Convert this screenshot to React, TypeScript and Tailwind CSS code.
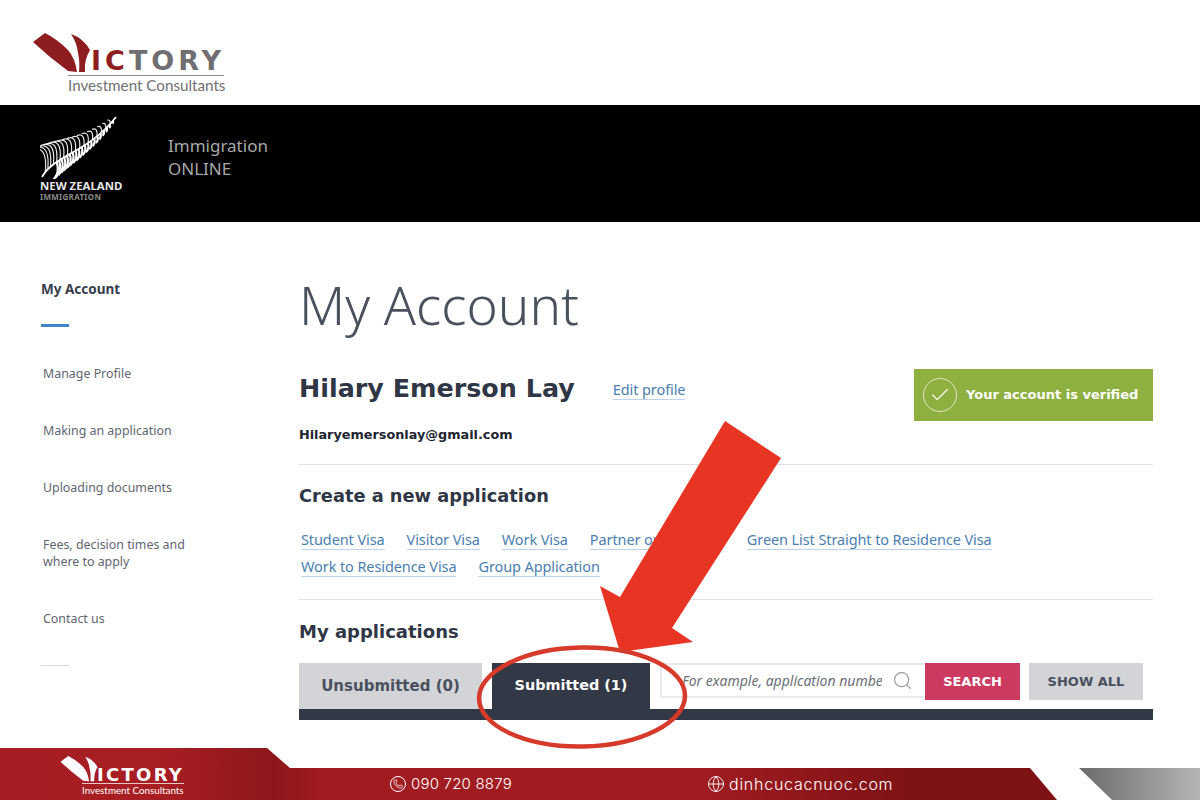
import { Check, Globe, Phone, Search } from "lucide-react";

const sideLinks = [
  { label: "Manage Profile", cls: "mt-[38px]" },
  { label: "Making an application", cls: "mt-[40px]" },
  { label: "Uploading documents", cls: "mt-[40px]" },
  { label: "Fees, decision times and where to apply", cls: "mt-[40px]" },
  { label: "Contact us", cls: "mt-[40px]" },
];

const VictoryMark = ({ color }: { color: string }) => (
  <svg viewBox="0 0 60 40" className="h-full w-full">
    <path d="M0 9 L12 0 Q24 6 35 17 Q42 25 44 39 L35 38 Q16 24 0 9 Z" fill={color} />
    <path d="M38 1 Q50 5 57 17 Q51 27 52 39 L46 39 Q47 28 45 20 Q44 10 38 1 Z" fill={color} />
  </svg>
);

const Fern = () => {
  // rachis is a cubic curve, leaflets hang off it
  const at = (t: number) => {
    const u = 1 - t;
    const a = u * u * u;
    const b = 3 * u * u * t;
    const c = 3 * u * t * t;
    const d = t * t * t;
    return [a * 2 + b * 14 + c * 48 + d * 76, a * 62 + b * 40 + c * 38 + d * 2];
  };
  const upper = Array.from({ length: 18 }, (_, i) => {
    const t = 0.08 + i * 0.05;
    const [x, y] = at(t);
    const len = 27 * (1 - t) + 3;
    return `M${x} ${y} Q${x + len * 0.1} ${y - len * 1.05} ${x - len * 0.55} ${y - len * 0.78}`;
  });
  const lower = Array.from({ length: 20 }, (_, i) => {
    const t = 0.28 + i * 0.036;
    const [x, y] = at(t);
    const len = 22 * (1 - t) + 2;
    return `M${x} ${y} Q${x + len * 0.2} ${y + len * 0.6} ${x - len * 0.2} ${y + len}`;
  });
  return (
    <svg viewBox="0 0 80 64" className="h-[64px] w-[80px]" fill="none" stroke="#ffffff">
      <path d="M2 62 C14 40 48 38 76 2" strokeWidth="1.8" />
      {upper.map((d, i) => (
        <path key={i} d={d} strokeWidth="1.2" opacity="0.9" />
      ))}
      {lower.map((d, i) => (
        <path key={i} d={d} strokeWidth="2.2" />
      ))}
    </svg>
  );
};

const TextLink = ({ children }: { children: string }) => (
  <a className="border-b border-[#bcd3e8] text-[14.5px] leading-[19px] tracking-[-0.1px] text-[#4a7fb0]">{children}</a>
);

export default function App() {
  return (
    <div className="relative flex h-[800px] w-[1200px] flex-col overflow-hidden bg-white font-['Noto_Sans',sans-serif]">
      {/* top logo */}
      <div className="h-[105px] pl-[33px] pt-[33px]">
        <div className="relative h-[60px] w-[195px]">
          <div className="absolute left-0 top-0 h-[40px] w-[60px]">
            <VictoryMark color="#8e1d20" />
          </div>
          <div className="absolute left-[58px] top-[13px] font-['DejaVu_Sans',sans-serif] text-[27px] font-bold leading-[29px] tracking-[4px] whitespace-nowrap text-[#6f6f71]">
            <span className="text-[#8e1d20]">IC</span>TORY
          </div>
          <div className="absolute left-[35px] top-[42px] w-[156px] border-t border-[#8a8a8a] pt-[1px] font-['Lato',sans-serif] text-[15.2px] leading-[17px] whitespace-nowrap text-[#6f6f71]">
            Investment Consultants
          </div>
        </div>
      </div>

      {/* immigration banner */}
      <div className="flex h-[117px] bg-black pl-[40px] pt-[10px]">
        <div className="w-[128px]">
          <Fern />
          <div className="font-['Noto_Sans',sans-serif] text-[11.4px] leading-[13px] font-bold whitespace-nowrap text-[#e8e8e8]">NEW ZEALAND</div>
          <div className="text-[8px] leading-[10px] font-bold tracking-[0.3px] text-[#8a8a8a]">IMMIGRATION</div>
        </div>
        <div className="pt-[19px] text-[17px] leading-[23px] text-[#a8a8a8]">
          <div>Immigration</div>
          <div>ONLINE</div>
        </div>
      </div>

      <div className="flex flex-1">
        {/* sidebar */}
        <aside className="w-[299px] shrink-0 pl-[41px] pt-[58px] text-[#5f6570]">
          <div className="text-[13.5px] leading-[18px] font-bold text-[#363d4b]">My Account</div>
          <div className="mt-[26px] h-[3px] w-[28px] bg-[#3f86c8]" />
          <div className="pl-[2px]">
            {sideLinks.map((l) => (
              <div key={l.label} className={`${l.cls} w-[150px] text-[12.4px] leading-[17px]`}>
                {l.label}
              </div>
            ))}
          </div>
          <div className="mt-[38px] h-[1px] w-[28px] bg-[#d5d7da]" />
        </aside>

        {/* main column */}
        <main className="w-[854px] pt-[51px] text-[#2f3645]">
          <h1 className="h-[64px] text-[53px] leading-[64px] font-light text-[#4a505c]">My Account</h1>
          <div className="mt-[32px] flex h-[52px] items-start">
            <h2 className="mt-[4px] font-['DejaVu_Sans',sans-serif] text-[25.4px] leading-[30px] font-bold whitespace-nowrap">Hilary Emerson Lay</h2>
            <div className="ml-[38px] mt-[11px] flex">
              <TextLink>Edit profile</TextLink>
            </div>
            <div className="ml-auto flex h-[52px] w-[239px] items-center bg-[#8db041] pl-[9px] text-white">
              <span className="flex h-[34px] w-[34px] items-center justify-center rounded-full border border-[#dfe9c4]">
                <Check size={22} strokeWidth={1.3} />
              </span>
              <span className="ml-[9px] font-['DejaVu_Sans',sans-serif] text-[13px] font-bold whitespace-nowrap">Your account is verified</span>
            </div>
          </div>
          <div className="mt-[5px] font-['DejaVu_Sans',sans-serif] text-[12.8px] leading-[18px] font-bold text-[#1e2430]">Hilaryemersonlay@gmail.com</div>
          <div className="mt-[20px] h-[1px] bg-[#e0e1e3]" />
          <h3 className="mt-[19px] font-['DejaVu_Sans',sans-serif] text-[17.8px] leading-[24px] font-bold">Create a new application</h3>
          <div className="mt-[22px] flex gap-[22px] pl-[2px]">
            <TextLink>Student Visa</TextLink>
            <TextLink>Visitor Visa</TextLink>
            <TextLink>Work Visa</TextLink>
            <span className="flex w-[135px]">
              <TextLink>Partner or</TextLink>
            </span>
            <TextLink>Green List Straight to Residence Visa</TextLink>
          </div>
          <div className="mt-[7px] flex gap-[22px] pl-[2px]">
            <TextLink>Work to Residence Visa</TextLink>
            <TextLink>Group Application</TextLink>
          </div>
          <div className="mt-[22px] h-[1px] bg-[#e0e1e3]" />
          <h3 className="mt-[20px] font-['DejaVu_Sans',sans-serif] text-[18px] leading-[24px] font-bold">My applications</h3>

          {/* tabs and search */}
          <div className="mt-[19px] flex h-[46px] items-start">
            <div className="flex h-[46px] w-[183px] items-center justify-center bg-[#d2d4d7] font-['DejaVu_Sans',sans-serif] text-[15px] font-bold text-[#4a505e]">Unsubmitted (0)</div>
            <div className="ml-[10px] flex h-[46px] w-[158px] items-center justify-center bg-[#323846] font-['DejaVu_Sans',sans-serif] text-[14.4px] font-bold text-white">Submitted (1)</div>
            <div className="ml-[10px] flex h-[35px] w-[265px] items-center border-2 border-r-0 border-[#e8e9ea] pl-[20px] pr-[12px]">
              <input
                placeholder="For example, application number"
                className="w-[200px] bg-transparent text-[14px] italic outline-none placeholder:text-[#6a6f78]"
              />
              <Search size={21} strokeWidth={1.4} className="ml-auto text-[#9a9da2]" />
            </div>
            <div className="flex h-[37px] w-[95px] items-center justify-center bg-[#cc3a60] font-['DejaVu_Sans',sans-serif] text-[13px] font-bold text-white">SEARCH</div>
            <div className="ml-[9px] flex h-[37px] w-[114px] items-center justify-center bg-[#d2d4d7] font-['DejaVu_Sans',sans-serif] text-[13px] font-bold text-[#4a505e]">SHOW ALL</div>
          </div>
          <div className="h-[11px] bg-[#323846]" />
        </main>
      </div>

      {/* footer */}
      <footer className="relative h-[52px] text-white">
        <svg viewBox="0 0 1200 52" className="absolute inset-0 h-full w-full">
          <defs>
            <linearGradient id="redBar" x1="0" x2="1" y1="0" y2="0">
              <stop offset="0" stopColor="#a51d22" />
              <stop offset="0.15" stopColor="#a81e23" />
              <stop offset="0.26" stopColor="#8c171a" />
              <stop offset="0.31" stopColor="#a11c20" />
              <stop offset="0.65" stopColor="#a21d21" />
              <stop offset="0.86" stopColor="#7f1214" />
            </linearGradient>
            <linearGradient id="grayBar" x1="0" x2="1" y1="0" y2="0">
              <stop offset="0" stopColor="#6b6b6b" />
              <stop offset="1" stopColor="#b5b5b5" />
            </linearGradient>
          </defs>
          <path d="M0 0 H267 L290 20 H1030 L1057 52 H0 Z" fill="url(#redBar)" />
          <path d="M1079 20 H1200 V52 H1112 Z" fill="url(#grayBar)" />
        </svg>
        <div className="absolute left-[60px] top-[8px] h-[26px] w-[40px]">
          <VictoryMark color="#ffffff" />
        </div>
        <div className="absolute left-[97px] top-[17px] font-['DejaVu_Sans',sans-serif] text-[18px] font-bold leading-[19px] tracking-[2.3px] whitespace-nowrap">ICTORY</div>
        <div className="absolute left-[82px] top-[35px] w-[102px] border-t border-[#e8c6c6] font-['Lato',sans-serif] text-[9.8px] leading-[12px] whitespace-nowrap">Investment Consultants</div>

        <div className="absolute left-[390px] top-[27px] flex items-center gap-[5px]">
          <span className="flex h-[16px] w-[16px] items-center justify-center rounded-full border border-white">
            <Phone size={10} strokeWidth={1.8} />
          </span>
          <span className="font-['Inter',sans-serif] text-[15px] leading-[18px] font-light tracking-[0.2px]">090 720 8879</span>
        </div>
        <div className="absolute left-[707px] top-[27px] flex items-center gap-[4px]">
          <Globe size={18} strokeWidth={1.2} />
          <span className="font-['Inter',sans-serif] text-[16px] leading-[18px] font-light tracking-[0.75px]">dinhcucacnuoc.com</span>
        </div>
      </footer>

      {/* annotation drawn over the screenshot */}
      <svg viewBox="0 0 1200 800" className="pointer-events-none absolute inset-0 h-[800px] w-[1200px]">
        <path d="M725 421 L781 458 L672 628 L693 642 L620 652 L600 586 L620 597 Z" fill="#e83523" />
        <ellipse cx="582" cy="697" rx="103" ry="49.5" fill="none" stroke="#d63a2a" strokeWidth="4.5" transform="rotate(-1 582 697)" />
      </svg>
    </div>
  );
}
